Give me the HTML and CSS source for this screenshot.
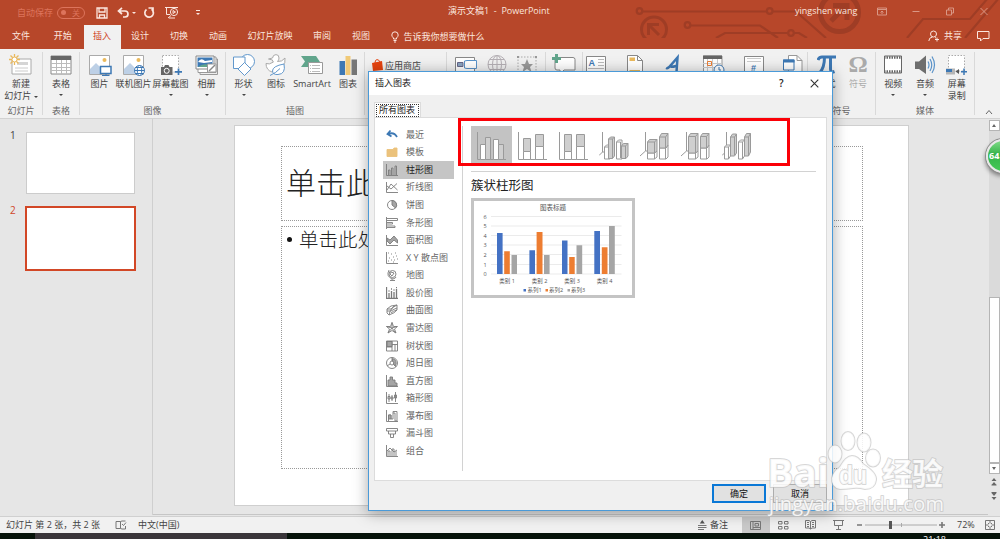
FILE: index.html
```
<!DOCTYPE html>
<html lang="zh-CN">
<head>
    <meta charset="UTF-8">
    <meta name="viewport" content="width=device-width, initial-scale=1.0">
    <title>演示文稿1 - PowerPoint</title>
    <link rel="stylesheet" href="styles.css">
</head>
<body>
    <div class="app">
        <header class="header">
            <svg class="circuit" width="370" height="38" viewBox="630 0 370 38">
                <circle cx="639.5" cy="11" r="2.8"/><circle cx="769.7" cy="11" r="2.8"/>
                <circle cx="687.5" cy="25" r="2.8"/><circle cx="791" cy="33" r="2.8"/>
                <path d="M643 11.5H767M773 11.5H796L826 38M691 25.500H760L778 38M716 38L725 33H788M794 33H799L807 38"/>
                <path d="M907 38L923 19H970L988 -2M965 38L999 -2"/>
                <circle class="ring" cx="654" cy="29.500" r="12.500"/>
                <circle class="ring-big" cx="839.500" cy="12.500" r="19"/>
                <path class="ring" d="M659 35L648.500 24.500M648.500 35V24.500H659"/>
                <path class="ring-big" d="M831 21L846 6M833 5.500H847V20"/>
            </svg>
            <div class="titlebar">
                <div class="quick">
                    <span class="autosave">自动保存</span>
                    <span class="toggle"><i></i>关</span>
                    <svg width="12" height="12" viewBox="0 0 12 12"><path d="M1 1H11V11H1ZM3 1V5H9V1M3.500 11V8H8.500V11" stroke-width="1.300"/></svg>
                    <svg width="12" height="12" viewBox="0 0 12 12"><path d="M1.500 4H8A3 3 0 0 1 8 10H6M5 .8L1.500 4L5 7" stroke-width="1.700"/></svg>
                    <b class="caret"></b>
                    <svg width="12" height="12" viewBox="0 0 12 12"><path d="M3.500 2.500A4.300 4.300 0 1 0 8.500 2.300M5.500 1H10V5.500" stroke-width="1.700"/></svg>
                    <svg class="q-show" width="14" height="13" viewBox="0 0 14 13"><path d="M0 1.500H13M1.500 2V8.500H5M3 12L6 9.500M10 12H4"/><circle cx="9" cy="6" r="3.600"/><path d="M8 4.500L10.500 6L8 7.500Z"/></svg>
                    <b class="caret caret-bar"></b>
                </div>
                <div class="doc-title">演示文稿1&nbsp; -&nbsp; PowerPoint</div>
                <div class="user">yingshen wang</div>
                <div class="window-buttons">
                    <svg width="10" height="9" viewBox="0 0 10 9"><path d="M.5 1H9.500V8H.5ZM.5 2.500H9.500M5 7V4M3.500 5.500L5 4L6.500 5.500"/></svg>
                    <svg width="10" height="9" viewBox="0 0 10 9"><path d="M1.500 4.500H8.500"/></svg>
                    <svg width="10" height="9" viewBox="0 0 10 9"><path d="M1.500 3H6.500V8H1.500ZM3.500 3V1H8.500V6H6.500"/></svg>
                    <svg width="10" height="9" viewBox="0 0 10 9"><path d="M1.500 1L8.500 8M8.500 1L1.500 8"/></svg>
                </div>
            </div>
            <nav class="tabs">
                <a class="tab tab-file">文件</a>
                <a class="tab tab-home">开始</a>
                <a class="tab active">插入</a>
                <a class="tab">设计</a>
                <a class="tab">切换</a>
                <a class="tab">动画</a>
                <a class="tab tab-wide">幻灯片放映</a>
                <a class="tab">审阅</a>
                <a class="tab">视图</a>
                <div class="tell-me">
                    <svg width="8" height="12" viewBox="0 0 8 12"><path d="M2.500 8V7Q.8 5.500 .8 4A3.200 3.200 0 0 1 7.200 4Q7.200 5.500 5.500 7V8ZM2.500 9.500H5.500M3 11H5"/></svg>
                    告诉我你想要做什么
                </div>
                <div class="share">
                    <svg width="12" height="12" viewBox="0 0 12 12"><circle cx="5.500" cy="4" r="3"/><path d="M.8 11Q1 7.300 4.500 7M7 7.500L8 8M9 7.500V11.500M7 9.500H11"/></svg>
                    共享
                    <svg class="comment" width="13" height="11" viewBox="0 0 13 11"><path d="M.5 .5H12V7.500H6L3.500 10V7.500H.5Z"/></svg>
                </div>
            </nav>
        </header>

        <section class="ribbon">
            <div class="group g-slide">
                <div class="tools">
                    <div class="tool">
                        <svg width="24" height="22" viewBox="0 0 24 22"><path d="M3 5H22V20H3Z" fill="#fff" stroke="#aaa"/><path d="M8 8H19V11H8Z" fill="#d5d5d5"/><path d="M6 14H19M6 17H19" stroke="#ccc"/><path d="M5.500 0V11M0 5.500H11M1.500 1.500L9.500 9.500M9.500 1.500L1.500 9.500" stroke="#eab95c" stroke-width="1.300"/><circle cx="5.500" cy="5.500" r="2.500" fill="#fff" stroke="#eab95c"/></svg>
                        <span>新建<br>幻灯片 <b class="caret"></b></span>
                    </div>
                </div>
                <div class="group-name">幻灯片</div>
            </div>
            <div class="group g-table">
                <div class="tools">
                    <div class="tool">
                        <svg width="22" height="22" viewBox="0 0 22 22"><path d="M1 2H21V20H1Z" fill="#fff" stroke="#888"/><path d="M1 2H21V6H1Z" fill="#666"/><path d="M6.500 6V20M11.500 6V20M16.500 6V20M1 9.500H21M1 13.500H21M1 16.500H21" stroke="#bbb"/></svg>
                        <span>表格</span><b class="caret"></b>
                    </div>
                </div>
                <div class="group-name">表格</div>
            </div>
            <div class="group g-image">
                <div class="tools">
                    <div class="tool w34">
                        <svg width="24" height="22" viewBox="0 0 24 22"><path d="M1.500 1.500H21.500V20.500H1.500Z" fill="#fff" stroke="#aaa"/><circle cx="16.500" cy="6" r="2" fill="#eab95c"/><path d="M2 20V15L8 9L15 16V20Z" fill="#bdd0e6"/><path d="M12.500 12.500H23V19.500H12.500Z" fill="#fff" stroke="#3d78b4" stroke-width="1.500"/><path d="M18 20V22M14 21.500H21.500" stroke="#3d78b4"/></svg>
                        <span>图片</span>
                    </div>
                    <div class="tool w36">
                        <svg width="24" height="22" viewBox="0 0 24 22"><path d="M1.500 1.500H21.500V20.500H1.500Z" fill="#fff" stroke="#aaa"/><circle cx="16.500" cy="6" r="2" fill="#eab95c"/><path d="M2 20V15L8 9L15 16V20Z" fill="#bdd0e6"/><g fill="#fff" stroke="#3d78b4"><circle cx="17.500" cy="16.500" r="5"/><ellipse cx="17.500" cy="16.500" rx="2.200" ry="5"/><path d="M12.500 16.500H22.500M13.500 13.500H21.500M13.500 19.500H21.500"/></g></svg>
                        <span>联机图片</span>
                    </div>
                    <div class="tool w39">
                        <svg width="24" height="22" viewBox="0 0 24 22"><path d="M3.500 1.500H19.500V18H3.500Z" fill="#fff" stroke="#aaa" stroke-dasharray="1.500 1.500"/><path d="M2 13H5L6 11H9.500L10.500 13H13.500V21H2Z" fill="#666"/><circle cx="7.700" cy="16.800" r="2.500" fill="#666" stroke="#fff"/><path d="M19.500 14.500V21M16 17.800H23" stroke="#3d78b4" stroke-width="1.700"/></svg>
                        <span>屏幕截图</span><b class="caret"></b>
                    </div>
                    <div class="tool w33">
                        <svg width="24" height="22" viewBox="0 0 24 22"><path d="M5 5H22.500V20.500H5Z" fill="#eee" stroke="#999"/><path d="M3 3H21V18.500H3Z" fill="#fff" stroke="#999"/><path d="M1 2H19V15H1Z" fill="#fff" stroke="#888"/><path d="M2.500 3.500H17.500V13H2.500Z" fill="#3d78b4"/><path d="M3 8Q6 3 10 7L17 6V8L9 9Z" fill="#fff"/><path d="M3 13Q9 8 17 12V13Z" fill="#61a58c"/><path d="M12.500 10H21V18H12.500Z" fill="#fff" stroke="#999"/><path d="M14 17L20 11" stroke="#888" stroke-width="1.500"/></svg>
                        <span>相册</span><b class="caret"></b>
                    </div>
                </div>
                <div class="group-name">图像</div>
            </div>
            <div class="group g-illus">
                <div class="tools">
                    <div class="tool w36">
                        <svg width="24" height="22" viewBox="0 0 24 22"><g fill="#fff" stroke="#6298cc"><circle cx="15.500" cy="7.500" r="7"/><path d="M1.500 3H13V14.500H1.500Z"/><path d="M12.500 8.500L19 15L12.500 21.500L6 15Z"/></g></svg>
                        <span>形状</span><b class="caret"></b>
                    </div>
                    <div class="tool w27">
                        <svg width="24" height="22" viewBox="0 0 24 22"><path d="M8.500 4Q9 .6 12 .6Q15 .6 15 4Q15 6 13.500 7.500Q18 8 21 4Q22 9 18 13L8 18Q2 16 2 9.500Q5 11 9.500 8Q8 7 8.500 6L4.500 5Z" fill="#fff" stroke="#aaa"/><path d="M20 10Q22 20 14 20.500Q9 21 8.500 17Q8.500 12 20 10ZM6 21.500Q12 19 16 14.500" fill="#fff" stroke="#6298cc"/></svg>
                        <span>图标</span>
                    </div>
                    <div class="tool w43">
                        <svg width="24" height="22" viewBox="0 0 24 22"><path d="M1 2H16L20 8L16 13H1L5 7.500Z" fill="#61a58c"/><path d="M8.500 8.500H22.500V19.500H8.500Z" fill="#fff" stroke="#999"/><path d="M12 11.500H20M12 14.500H20M12 17.500H20M10 11.500H11M10 14.500H11M10 17.500H11" stroke="#bbb"/></svg>
                        <span>SmartArt</span>
                    </div>
                    <div class="tool w31">
                        <svg width="20" height="22" viewBox="0 0 20 22"><path d="M1.500 7H7V21H1.500Z" fill="#3d78b4"/><path d="M7.500 2H12.500V21H7.500Z" fill="#f0c977"/><path d="M13.500 5.500H19V21H13.500Z" fill="#777"/></svg>
                        <span>图表</span>
                    </div>
                </div>
                <div class="group-name">插图</div>
            </div>
            <div class="group g-store">
                <svg width="11" height="12" viewBox="0 0 11 12"><path d="M0 4L10 2L11 11L1 12Z" fill="#e6430f"/><path d="M3 4Q3 .6 5 .6T8 3" fill="none" stroke="#e6430f"/></svg>
                应用商店
            </div>
            <div class="group g-links">
                <div class="tools">
                    <svg width="24" height="22" viewBox="0 0 24 22"><path d="M1.500 3.500H20.500V18H1.500Z" fill="#fff" stroke="#888"/><path d="M3.500 8.500H9V12.500H3.500Z" fill="#8aa4c0" stroke="#668"/><path d="M10.500 7L13 6.500H22.500V14.500H13L10.500 14Z" fill="#fff" stroke="#5b93c9"/></svg>
                    <svg width="22" height="22" viewBox="0 0 22 22" fill="none" stroke="#b5b0b5"><circle cx="11" cy="10.500" r="9"/><ellipse cx="11" cy="10.500" rx="4.500" ry="9"/><path d="M2 10.500H20M11 1.500V19M4 5.500H18M4 15.500H18"/></svg>
                    <svg width="22" height="22" viewBox="0 0 22 22"><path d="M2 3H20V20H2Z" fill="none" stroke="#aaa" stroke-dasharray="1.500 1.500"/><path d="M1 2H3V4H1ZM19 2H21V4H19Z" fill="#999"/><path d="M11 5L13 10H17L14 13L15.500 18L11 15L6.500 18L8 13L5 10H9Z" fill="#999"/></svg>
                </div>
            </div>
            <div class="group g-comment">
                <div class="tools">
                    <svg width="26" height="22" viewBox="0 0 26 22"><path d="M6 3.500H22Q24 3.500 24 5.500V16H13L9 20V16H6Q4 16 4 14V5Q4 3.500 6 3.500Z" fill="#fff" stroke="#888"/><path d="M5.500 0V9M1 4.500H10" stroke="#61a58c" stroke-width="3"/></svg>
                </div>
            </div>
            <div class="group g-text">
                <div class="tools">
                    <svg width="22" height="22" viewBox="0 0 22 22"><path d="M1.500 2.500H20.500V20H1.500Z" fill="#fff" stroke="#888"/><path d="M13 5.500H19M13 8.500H19M13 11.500H19M3 14.500H19" stroke="#bbb"/><text x="3.500" y="12" class="ico-a">A</text></svg>
                    <svg width="22" height="22" viewBox="0 0 22 22"><path d="M3.500 1.500H13.500L18.500 6.500V22H3.500Z" fill="#fff" stroke="#888"/><path d="M13.500 1.500V6.500H18.500" fill="none" stroke="#888"/><path d="M5.500 3.500H11V7H5.500ZM5.500 16H16V19H5.500Z" fill="#eab95c"/></svg>
                    <svg width="22" height="22" viewBox="0 0 22 22"><path d="M3 14Q5 15 8 11L14.500 3.500L13.500 18M8 11Q6 14 13 12" fill="none" stroke="#3d78b4" stroke-width="2.500"/></svg>
                    <svg width="24" height="22" viewBox="0 0 24 22"><path d="M1.500 2H20V20H1.500Z" fill="#fff" stroke="#999"/><path d="M1 1.500H20V5H1Z" fill="#666"/><path d="M5.500 5V20M10.500 5V20M15.500 5V20M1 9.500H20M1 13.500H20M1 17.500H20" stroke="#ccc"/><path d="M5.500 7.500H9.500V11.500H5.500Z" fill="none" stroke="#ed7d31"/><circle cx="17" cy="16" r="5" fill="#fff" stroke="#3d78b4"/><path d="M17 13V16H19" fill="none" stroke="#3d78b4"/></svg>
                    <svg width="22" height="22" viewBox="0 0 22 22"><path d="M1.500 2.500H20.500V20H1.500Z" fill="#fff" stroke="#888"/><path d="M4 4.500H18M4 7.500H18" stroke="#ccc"/><text x="8" y="16.500" class="ico-a">#</text></svg>
                    <svg width="22" height="22" viewBox="0 0 22 22"><path d="M6.500 1.500H15L20 6.500V18H6.500Z" fill="#fff" stroke="#999"/><path d="M15 1.500V6.500H20" fill="none" stroke="#999"/><path d="M1.500 6H12V16H1.500Z" fill="#fff" stroke="#3d78b4"/><path d="M1 5.500H12.500V8.500H1Z" fill="#3d78b4"/></svg>
                </div>
            </div>
            <div class="group g-symbol">
                <div class="tools">
                    <div class="tool w34"><svg width="20" height="22" viewBox="0 0 20 22"><path d="M1 6Q2 3 5 3H19M7.500 3Q7.500 14 2.500 19M13.500 3V15Q13.500 19 17.500 17.500" fill="none" stroke="#3d78b4" stroke-width="3"/></svg><span>公式</span></div>
                    <div class="tool w27 off"><em class="glyph">Ω</em><span>符号</span></div>
                </div>
                <div class="group-name">符号</div>
            </div>
            <div class="group g-media">
                <div class="tools">
                    <div class="tool w36">
                        <svg width="20" height="22" viewBox="0 0 20 22"><path d="M1.500 2H18.500V19H1.500Z" fill="#fff" stroke="#666"/><path d="M1 3.500H19M1 17.500H19" stroke="#666" stroke-width="2.500" stroke-dasharray="1.500 1"/></svg>
                        <span>视频</span><b class="caret"></b>
                    </div>
                    <div class="tool w27">
                        <svg width="22" height="22" viewBox="0 0 22 22"><path d="M1 7.500H5L12 1.500V20L5 15H1Z" fill="#6e6e6e"/><path d="M14 7.500Q16 11 14 14.500M16 5Q19.500 11 16 17M18 2.500Q23 11 18 19" fill="none" stroke="#5b93c9" stroke-width="1.200"/></svg>
                        <span>音频</span><b class="caret"></b>
                    </div>
                    <div class="tool w36">
                        <svg width="24" height="22" viewBox="0 0 24 22"><path d="M3.500 1.500H19.500V17H3.500Z" fill="#fff" stroke="#aaa" stroke-dasharray="1.500 1.500"/><path d="M1 14.500H10V20.500H1Z" fill="#b5b5b5"/><path d="M1 15H7V18H1Z" fill="#3d78b4"/><path d="M10.500 17.500L14 15V20Z" fill="#555"/><path d="M19 14.500V21M16 17.800H22" stroke="#3d78b4" stroke-width="1.500"/></svg>
                        <span>屏幕<br>录制</span>
                    </div>
                </div>
                <div class="group-name">媒体</div>
            </div>
            <svg class="collapse" width="8" height="6" viewBox="0 0 8 6"><path d="M1 5L4 1.500L7 5"/></svg>
        </section>

        <main class="workspace">
            <aside class="thumbs">
                <div class="thumb"><span>1</span><div class="thumb-page"></div></div>
                <div class="thumb current"><span>2</span><div class="thumb-page"></div></div>
            </aside>
            <div class="stage">
                <div class="slide">
                    <div class="holder holder-title">单击此</div>
                    <div class="holder holder-body"><i></i>单击此处</div>
                </div>
            </div>
            <div class="scroll">
                <div class="scroll-btn"><b class="arrow up"></b></div>
                <div class="scroll-track"><div class="scroll-thumb"></div></div>
                <div class="scroll-btn"><b class="arrow"></b></div>
                <svg width="8" height="26" viewBox="0 0 8 26"><path d="M4 4L6.500 7H1.500ZM4 8L6.500 11H1.500ZM1.500 10.500H6.500V11.500H1.500ZM4 22L6.500 19H1.500ZM4 26L6.500 23H1.500ZM1.500 18H6.500V19H1.500Z" fill="#666"/></svg>
                <div class="ball">64</div>
            </div>
        </main>

        <footer class="status">
            <span class="s-page">幻灯片 第 2 张，共 2 张</span>
            <svg class="s-book" width="12" height="10" viewBox="0 0 12 10"><path d="M5.500 1.500H1V8.500H5.500V1.500L7 1H10.500M5.500 8.500L7 9H10.500V6M7 4L8.500 5.500L11 2.500"/></svg>
            <span>中文(中国)</span>
            <div class="status-right">
                <svg width="9" height="10" viewBox="0 0 9 10"><path d="M0 5.500H8.500M0 7.500H8.500M0 9.500H6"/><path d="M4.300 0L6.800 3.500H1.800Z" class="solid"/></svg>
                <span class="s-notes">备注</span>
                <div class="view on"><svg width="11" height="9" viewBox="0 0 11 9"><path d="M.5 .5H10.500V8.500H.5ZM3 .5V8.500M5 2.500H8.500V5H5ZM3 6.500H10"/></svg></div>
                <div class="view"><svg width="11" height="9" viewBox="0 0 11 9"><path d="M.5 .5H4V3H.5ZM6.500 .5H10V3H6.500ZM.5 5.500H4V8H.5ZM6.500 5.500H10V8H6.500Z"/></svg></div>
                <div class="view"><svg width="11" height="10" viewBox="0 0 11 10"><path d="M5.500 1.500L4 .5H.5V8H4L5.500 9L7 8H10.500V.5H7ZM5.500 1.500V9M2 2.500H4M2 4.500H4M2 6.500H4M7 2.500H9M7 4.500H9M7 6.500H9"/></svg></div>
                <div class="view"><svg width="11" height="10" viewBox="0 0 11 10"><path d="M0 .5H11M1.500 1V5.500H9.500V1M5.500 5.500V9M3 9.500H8"/></svg></div>
                <svg class="zoom" width="90" height="12" viewBox="0 0 90 12"><path d="M1 6H6M83 6H89M86 3V9" stroke-width="1.600"/><path d="M9 6H81M45.500 4V8" stroke="#aaa"/><path d="M33 2H36V10H33Z" class="solid"/></svg>
                <span class="s-pct">72%</span>
                <svg class="s-fit" width="10" height="10" viewBox="0 0 10 10"><path d="M.5 .5H9.500V9.500H.5ZM5 1V3.500M5 6.500V9M1 5H3.500M6.500 5H9M3 3L4 4M7 3L6 4M3 7L4 6M7 7L6 6"/></svg>
            </div>
        </footer>
        <div class="taskbar"><div class="task"></div><div class="clock">21:18</div></div>
    </div>

    <div class="dialog">
        <div class="dialog-title">
            <span>插入图表</span>
            <b>?</b>
            <svg width="9" height="9" viewBox="0 0 9 9"><path d="M.7 .7L8.300 8.300M8.300 .7L.7 8.300"/></svg>
        </div>
        <div class="dialog-tab"><span>所有图表</span></div>
        <div class="panel">
            <ul class="kinds">
                <li><svg viewBox="0 0 12 12"><path d="M4.500 1.500L1.500 5L5.500 7.500M2 5Q8 2.500 11 8" class="undo"/></svg>最近</li>
                <li><svg viewBox="0 0 12 12"><path d="M1 3.500H7L8 2H11V10.500H1Z" class="folder"/></svg>模板</li>
                <li class="picked"><svg viewBox="0 0 12 12"><path d="M.5 0V11.500H12M2.500 11V6H4V11M5.500 11V4H7V11M9 11V2H10.500V11"/></svg>柱形图</li>
                <li><svg viewBox="0 0 12 12"><path d="M.5 1V11.500H12M1 9L5 3L11.500 9M1 5L5 8L11 2.500"/></svg>折线图</li>
                <li><svg viewBox="0 0 12 12"><circle cx="6" cy="6" r="4.500"/><path d="M6 1.500V6L9.500 9A4.500 4.500 0 0 0 6 1.500Z" class="fill"/></svg>饼图</li>
                <li><svg viewBox="0 0 12 12"><path d="M.5 0V12M1 1.500H11.500V3.500H1M1 5.500H6.500V7H1M1 9H9V10.500H1"/></svg>条形图</li>
                <li><svg viewBox="0 0 12 12"><path d="M.5 1V11.500H12"/><path d="M1 4L4 6L8 2L11.500 6V9L8 6L4 10L1 7Z" class="fill"/></svg>面积图</li>
                <li><svg viewBox="0 0 12 12"><path d="M.5 0V11.500H12"/><path d="M2 1H3M5 2H6M9 1H10M3 6H4M7 5H8M10 4H11M2 9H3M5 8H6M8 8H9M7 10H8M11 7H12"/></svg>X Y 散点图</li>
                <li><svg viewBox="0 0 12 12"><circle cx="6.500" cy="5" r="3.500"/><path d="M3 1Q-.5 8 7 10Q10 9 10 8M4 11.500H9M6 10V11M5 3L8 4L6 7L4 5Z"/></svg>地图</li>
                <li><svg viewBox="0 0 12 12"><path d="M.5 0V11.500H12M3 11V6M5.500 11V4M8 11V5M10.500 11V2M2.500 4H3.500M5 2H6M7.500 3H8.500M10 .5H11" stroke-width="1.300"/></svg>股价图</li>
                <li><svg viewBox="0 0 12 12"><path d="M1 5Q4 1 11 1V6Q9 9 3 11L1 9ZM1 5H5Q7 3 11 1M1 7H5Q8 5 11 4M3 11Q3 7 8 2M5 9Q7 7 11 6"/></svg>曲面图</li>
                <li><svg viewBox="0 0 12 12"><path d="M6 .5L7.500 4.500H11.500L8.500 7L10 11L6 8.500L2 11L3.500 7L.5 4.500H4.500ZM6 .5V6L11 4.500M6 6L9.500 11M6 6L2 11M6 6L.5 4.500"/></svg>雷达图</li>
                <li><svg viewBox="0 0 12 12"><path d="M.5 1H11.500V11H.5ZM6 1V11M6 4.500H11.500M9 4.500V11M.5 7H6"/><path d="M1 1.500H6V6.500H1Z" class="fill"/></svg>树状图</li>
                <li><svg viewBox="0 0 12 12"><circle cx="6" cy="6" r="5.500"/><circle cx="6" cy="6" r="2"/><path d="M6 .5V4M8 7L10 10M4 7L1 9" /><path d="M6.500 1.500A4.500 4.500 0 0 1 9 9L7.500 7Q8.500 5 6.500 4Z" class="fill"/></svg>旭日图</li>
                <li><svg viewBox="0 0 12 12"><path d="M.5 0V11.500H12"/><path d="M2 11V5H4V2H6.500V5H9V8H11V11Z" class="fill"/></svg>直方图</li>
                <li><svg viewBox="0 0 12 12"><path d="M.5 0V11.500H12M3 10V2M6 9V3M9.500 10V0M2 4.500H4V7H2ZM5 5H7V7H5ZM8.500 3H10.500V6H8.500Z"/></svg>箱形图</li>
                <li><svg viewBox="0 0 12 12"><path d="M.5 0V11.500H12M2.500 11V5H5V9H7V1.500H11V11H9V3H7"/><path d="M2.500 5H5V9H2.500Z" class="fill"/></svg>瀑布图</li>
                <li><svg viewBox="0 0 12 12"><path d="M.5 1.500H11.500V4H.5ZM2.500 4V7H9.500V4M4.500 7V10.500H7.500V7"/></svg>漏斗图</li>
                <li><svg viewBox="0 0 12 12"><path d="M.5 0V11.500H12M2 11V6H4V11M6 11V4H8V11M10 11V6M1 6L4 3L8 7L11 5"/></svg>组合</li>
            </ul>
            <div class="detail">
                <div class="subtypes">
                    <div class="sub picked"><svg viewBox="0 0 30 28"><path d="M1.500 0V27.500H30"/><path class="w" d="M4.500 12.500H9.500V27.500H4.500ZM17.500 7.500H22.500V27.500H17.500Z"/><path class="g" d="M9.500 5.500H14.500V27.500H9.500ZM22.500 12.500H27.500V27.500H22.500Z"/></svg></div>
                    <div class="sub"><svg viewBox="0 0 30 28"><path d="M1.500 0V27.500H30"/><path class="w" d="M6.500 19.500H13.500V27.500H6.500ZM18.500 14.500H26.500V27.500H18.500Z"/><path class="g" d="M6.500 6.500H13.500V19.500H6.500ZM18.500 2.500H26.500V14.500H18.500Z"/></svg></div>
                    <div class="sub"><svg viewBox="0 0 30 28"><path d="M1.500 0V27.500H30"/><path class="w" d="M6.500 19.500H13.500V27.500H6.500ZM18.500 14.500H26.500V27.500H18.500Z"/><path class="g" d="M6.500 2.500H13.500V19.500H6.500ZM18.500 2.500H26.500V14.500H18.500Z"/></svg></div>
                    <div class="sub"><svg viewBox="0 0 30 28"><path d="M3.500 0V20L0 23.500M3.500 20H10M27 20L29 18"/><path class="w" d="M5.500 15L7.500 13H11V27H5.500ZM17.500 10L19.500 8H23V27H17.500Z"/><path class="g" d="M9.500 7L11.500 5H15.500V24L13.500 26.500H9.500ZM22.500 14L24.500 11.500H29V24L27 26.500H22.500Z"/><path d="M5.500 15H9.500V27M9.500 7H13.500V26.500M13.500 7L15.500 5M17.500 10H21.500V26M22.500 14H26.500V26.500M26.500 14L29 11.500"/></svg></div>
                    <div class="sub"><svg viewBox="0 0 30 28"><path d="M5.500 0V19L0 24M5.500 19H8M25 21L28 18"/><path class="w" d="M7.500 21H14.500L17 19V25L14.500 27H7.500ZM19.500 16H26L28 13V25L26 27H19.500Z"/><path class="g" d="M7.500 10L9.500 7.500H17V19L14.500 21H7.500ZM19.500 5L21.500 1.500H28V13L26 16H19.500Z"/><path d="M7.500 10H14.500V27M14.500 10L17 7.500M19.500 5H25.500V27M25.500 5L28 1.500"/></svg></div>
                    <div class="sub"><svg viewBox="0 0 30 28"><path d="M5.500 0V19L0 24M5.500 19H8M25 21L28 18"/><path class="w" d="M7.500 21H14.500L17 19V25L14.500 27H7.500ZM19.500 16H26L28 13V25L26 27H19.500Z"/><path class="g" d="M7.500 4.500L9.500 1.500H17V19L14.500 21H7.500ZM19.500 4.500L21.500 1.500H28V13L26 16H19.500Z"/><path d="M7.500 4.500H14.500V27M14.500 4.500L17 1.500M19.500 4.500H25.500V27M25.500 4.500L28 1.500"/></svg></div>
                    <div class="sub"><svg viewBox="0 0 30 28"><path d="M4.500 0V19L0 23.500M4.500 19H8"/><path class="g" d="M8.500 5L10.500 2H14.500V21L12.500 24H8.500ZM22.500 5L24.500 1.500H28.500V20L26.500 24H22.500Z"/><path class="w" d="M2.500 15L4.500 13H8.500V24L6.500 27H2.500ZM16.500 10L18.500 8H22.500V24L20.500 27H16.500Z"/><path d="M2.500 15H6.500V27M6.500 15L8.500 13M8.500 5H12.500V23M12.500 5L14.500 2M16.500 10H20.500V27M20.500 10L22.500 8M22.500 5H26.500V24M26.500 5L28.500 1.500"/></svg></div>
                </div>
                <h2>簇状柱形图</h2>
                <svg class="preview" width="158" height="94" viewBox="0 0 158 94">
                    <text class="chart-title" x="79" y="8.500">图表标题</text>
                    <path class="lines" d="M17 15.500H147.500M17 25H147.500M17 34.500H147.500M17 44H147.500M17 53.500H147.500M17 63.500H147.500M17 73H147.500"/>
                    <g class="axis">
                        <text x="11" y="17.500">6</text><text x="11" y="27">5</text><text x="11" y="36.500">4</text><text x="11" y="46">3</text><text x="11" y="55.500">2</text><text x="11" y="65.500">1</text><text x="11" y="75">0</text>
                    </g>
                    <path fill="#4472c4" d="M23 32H28.600V73H23ZM55.400 49.200H61V73H55.400ZM88 39.600H93.500V73H88ZM120.300 30H126V73H120.300Z"/>
                    <path fill="#ed7d31" d="M30.200 50.200H35.800V73H30.200ZM62.600 31H68.500V73H62.600ZM95.200 56H100.700V73H95.200ZM127.800 46.200H133.500V73H127.800Z"/>
                    <path fill="#a5a5a5" d="M37.500 54H43V73H37.500ZM70 54H75.600V73H70ZM102.500 44.300H108.200V73H102.500ZM135 25H140.800V73H135Z"/>
                    <g class="labels">
                        <text x="33" y="82">类别 1</text><text x="65.500" y="82">类别 2</text><text x="98" y="82">类别 3</text><text x="130.500" y="82">类别 4</text>
                        <text x="60.500" y="91">系列1</text><text x="82" y="91">系列2</text><text x="104" y="91">系列3</text>
                    </g>
                    <path fill="#4472c4" d="M49.500 88H52V90.500H49.500Z"/><path fill="#ed7d31" d="M71.500 88H74V90.500H71.500Z"/><path fill="#a5a5a5" d="M93.500 88H96V90.500H93.500Z"/>
                </svg>
            </div>
        </div>
        <div class="dialog-actions">
            <button class="btn btn-ok">确定</button>
            <button class="btn">取消</button>
        </div>
        <div class="marker"></div>
    </div>

    <svg class="watermark" width="184" height="92" viewBox="764 428 184 92">
        <g class="paw">
            <ellipse cx="835" cy="454" rx="6.500" ry="8.500"/>
            <ellipse cx="848" cy="441" rx="6.500" ry="9"/>
            <ellipse cx="864" cy="442.500" rx="6.500" ry="9"/>
            <ellipse cx="873" cy="458" rx="7" ry="8.500"/>
            <path d="M852 456Q858 456 863 464Q877 473 876 480Q875 489 865 489Q858 487 853 488Q846 489 840 489Q831 487 832 478Q833 472 840 467Q846 456 852 456Z"/>
        </g>
        <text class="wm-bai" x="767" y="487" textLength="62" lengthAdjust="spacingAndGlyphs">Bai</text>
        <text class="wm-du" x="839" y="484" textLength="28" lengthAdjust="spacingAndGlyphs">du</text>
        <text class="wm-cn" x="882" y="485" textLength="61">经验</text>
        <text class="wm-url" x="769" y="511" textLength="175">jingyan.baidu.com</text>
    </svg>
</body>
</html>
```
FILE: styles.css
```
* {
    box-sizing: border-box;
}
body {
    margin: 0;
    width: 1000px;
    height: 539px;
    overflow: hidden;
    position: relative;
    font-family: "Open Sans", "Noto Sans CJK SC", sans-serif;
    font-size: 9px;
    line-height: 12px;
    color: #444;
}
svg {
    display: block;
    flex: none;
}
.app {
    display: flex;
    flex-direction: column;
    height: 539px;
}

/* header */
.header {
    position: relative;
    height: 49px;
    background: #b7472a;
    color: #fbe6df;
}
.header svg {
    fill: none;
    stroke: #fbe6df;
}
.header .circuit {
    position: absolute;
    right: 0;
    top: 0;
    stroke: #9f3d25;
    stroke-width: 2.2;
}
.circuit .ring {
    stroke-width: 3;
}
.circuit .ring-big {
    stroke-width: 5;
}
.titlebar {
    position: relative;
    display: flex;
    align-items: center;
    height: 25px;
}
.quick {
    display: flex;
    align-items: center;
    width: 448px;
    padding-left: 17px;
}
.autosave {
    color: #dd745c;
    width: 40px;
}
.toggle {
    display: flex;
    align-items: center;
    justify-content: space-between;
    width: 28px;
    height: 12px;
    padding: 0 4px 0 3px;
    margin-right: 11px;
    border: 1px solid #dd745c;
    border-radius: 6px;
    font-size: 8px;
    color: #dd745c;
}
.toggle i {
    width: 5px;
    height: 5px;
    border-radius: 50%;
    background: #dd745c;
}
.quick svg {
    margin-right: 9px;
}
.quick .caret {
    color: #fbe6df;
    margin: 0 7px 0 -6px;
}
.quick .q-show {
    margin-left: 1px;
    margin-right: 17px;
}
.caret {
    display: inline-block;
    flex: none;
    border: 2px solid transparent;
    border-top-color: currentColor;
    border-bottom: 0;
    vertical-align: middle;
}
.quick .caret-bar {
    margin: 0;
    position: relative;
    top: 1px;
}
.caret-bar::before {
    content: "";
    position: absolute;
    left: -2px;
    top: -5px;
    width: 4px;
    height: 1px;
    background: #fbe6df;
}
.doc-title {
    width: 347px;
    margin-top: -3px;
}
.user {
    width: 82px;
    margin-top: -3px;
}
.window-buttons {
    display: flex;
    gap: 24px;
    margin-top: -3px;
    opacity: .5;
}
.tabs {
    position: relative;
    display: flex;
    height: 24px;
    line-height: 22px;
}
.tab {
    width: 39px;
    text-align: center;
}
.tab-file {
    width: 42px;
}
.tab-home {
    width: 41.5px;
}
.tab.active {
    width: 37px;
    background: #f1f1f1;
    color: #d0472a;
}
.tab-wide {
    width: 65px;
}
.tell-me {
    display: flex;
    align-items: center;
    gap: 5px;
    margin-left: 10px;
}
.share {
    display: flex;
    align-items: center;
    gap: 4px;
    margin-left: auto;
    padding: 0 10px 2px 0;
}
.share .comment {
    margin-left: 11px;
}

/* ribbon */
.ribbon {
    display: flex;
    height: 70px;
    padding-top: 3px;
    background: #f1f1f1;
    border-bottom: 1px solid #d2d2d2;
}
.group {
    flex: none;
    display: flex;
    flex-direction: column;
    justify-content: space-between;
    height: 63px;
    border-right: 1px solid #d9d9d9;
}
.group-name {
    text-align: center;
    line-height: 12px;
    color: #666;
    margin-bottom: -2px;
}
.tools {
    display: flex;
    justify-content: center;
    padding-top: 2px;
}
.tool {
    display: flex;
    flex-direction: column;
    align-items: center;
    white-space: nowrap;
    text-align: center;
    line-height: 12px;
}
.tool span {
    padding-top: 2px;
}
.tool > .caret {
    margin-top: 4px;
}
.g-slide { width: 43px; }
.g-table { width: 37px; }
.g-image { width: 146px; }
.g-illus { width: 139px; }
.g-links { width: 99px; }
.g-comment { width: 37px; }
.g-text { width: 225px; }
.g-symbol { width: 68px; }
.g-media { width: 99px; }
.w27 { width: 30px; }
.w31 { width: 30px; }
.w33 { width: 33px; }
.w34 { width: 33px; }
.w36 { width: 35px; }
.w39 { width: 39px; }
.w43 { width: 42px; }
.g-image .tools {
    padding-left: 1px;
}
.g-illus .tools {
    padding-right: 1px;
}
.g-store {
    flex-direction: row;
    justify-content: flex-start;
    align-items: flex-start;
    gap: 2px;
    width: 82px;
    padding: 7px 0 0 7px;
    line-height: 13px;
}
.g-links .tools {
    gap: 8px;
}
.g-text .tools {
    gap: 17px;
    padding-right: 1px;
}
.ico-a {
    font: bold 9px "Liberation Sans", sans-serif;
    fill: #3d78b4;
}
.glyph {
    height: 22px;
    font: bold 24px/20px "Liberation Serif", serif;
    color: #aaa;
}
.off {
    color: #aaa;
}
.collapse {
    align-self: flex-end;
    margin: 0 0 3px 10px;
    fill: none;
    stroke: #666;
}

/* slides */
.workspace {
    display: flex;
    height: 398px;
    background: #e6e6e6;
    border-bottom: 1px solid #d0d0d0;
}
.thumbs {
    width: 153px;
    height: 396px;
    padding: 13px 0 0 10px;
    border-right: 1px solid #cfcfcf;
}
.thumb {
    display: flex;
    height: 62px;
    margin-bottom: 12px;
    font-size: 10px;
    line-height: 7px;
}
.thumb span {
    width: 16px;
}
.thumb-page {
    width: 109px;
    height: 62px;
    background: #fff;
    border: 1px solid #ccc;
}
.thumb.current span {
    width: 15px;
    padding-top: 1px;
    color: #d0472a;
}
.current .thumb-page {
    width: 111px;
    height: 65px;
    border: 2px solid #d24726;
}
.stage {
    width: 835px;
    height: 396px;
    padding: 6px 0 0 81px;
    border-bottom: 1px solid #c6c6c6;
}
.slide {
    width: 675px;
    height: 381px;
    padding: 20px 45px 0 46px;
    background: #fff;
    border: 1px solid #cfcfcf;
    color: #222;
}
.holder {
    width: 582px;
    border: 1px dotted #999;
    white-space: nowrap;
    font-family: "Noto Sans CJK SC", sans-serif;
    font-weight: 300;
}
.holder-title {
    height: 75px;
    padding-left: 4px;
    font-size: 30px;
    line-height: 69px;
}
.holder-body {
    display: flex;
    align-items: flex-start;
    height: 243px;
    margin-top: 5px;
    padding: 0 0 0 5px;
    font-size: 19.5px;
    line-height: 23px;
}
.holder-body i {
    width: 5px;
    height: 5px;
    margin: 10px 7px 0 0;
    border-radius: 50%;
    background: #111;
}
.scroll {
    position: relative;
    display: flex;
    flex-direction: column;
    align-items: center;
    width: 12px;
    padding-top: 1px;
}
.scroll-btn {
    display: flex;
    align-items: center;
    justify-content: center;
    width: 11px;
    height: 11px;
    background: #fff;
    border: 1px solid #b5b5b5;
}
.arrow {
    border: 2.5px solid transparent;
    border-top: 3px solid #666;
    border-bottom: 0;
}
.arrow.up {
    border-top: 0;
    border-bottom: 3px solid #666;
}
.scroll-track {
    display: flex;
    flex-direction: column;
    justify-content: flex-end;
    width: 11px;
    height: 332px;
    background: #dadada;
}
.scroll-thumb {
    height: 166px;
    background: #fff;
    border: 1px solid #b5b5b5;
}
.ball {
    position: absolute;
    left: -2px;
    top: 20px;
    width: 34px;
    height: 34px;
    padding-left: 1px;
    border: 2px solid #e8e8e8;
    border-radius: 50%;
    background: linear-gradient(#7fdb86, #35b349 45%, #45c957);
    box-shadow: 0 0 0 1px #8d8d8d, -1px 3px 4px rgba(0, 0, 0, .4);
    color: #fff;
    font-weight: bold;
    line-height: 30px;
}

/* status bar */
.status {
    display: flex;
    align-items: center;
    height: 16px;
    padding-left: 6px;
    background: #f1f1f1;
}
.status svg {
    fill: none;
    stroke: #777;
}
.status svg .solid {
    fill: #555;
    stroke: none;
}
.s-page {
    width: 109px;
    white-space: nowrap;
}
.s-book {
    margin-right: 11px;
}
.status-right {
    display: flex;
    align-items: center;
    margin-left: auto;
    padding-right: 5px;
}
.s-notes {
    width: 32px;
    margin-left: 3px;
}
.view {
    display: flex;
    align-items: center;
    justify-content: center;
    width: 27.5px;
    height: 16px;
}
.view.on {
    background: #c9c9c9;
}
.zoom {
    margin: 0 11px 0 4px;
}
.s-pct {
    width: 28px;
}
.taskbar {
    display: flex;
    height: 6px;
    padding-left: 35px;
    background: #06130a;
    overflow: hidden;
}
.task {
    width: 252px;
    background: #3a363a;
}
.clock {
    margin-left: 636px;
    padding-top: 1px;
    color: #fff;
    line-height: 12px;
}

/* insert chart dialog */
.dialog {
    position: absolute;
    left: 368px;
    top: 71px;
    width: 465px;
    height: 440px;
    padding: 0 5px;
    background: #f0f0f0;
    border: 1px solid #4a9ad8;
    box-shadow: 0 2px 14px rgba(0, 0, 0, .35);
    color: #222;
}
.dialog-title {
    display: flex;
    align-items: center;
    height: 23px;
    margin: 0 -5px;
    padding: 0 13px 1px 6px;
    background: #fff;
}
.dialog-title span {
    width: 405px;
}
.dialog-title b {
    width: 31px;
    font-size: 10px;
    font-weight: 600;
}
.dialog-title svg {
    fill: none;
    stroke: #333;
    stroke-width: 1.1;
}
.dialog-tab {
    width: 47px;
    height: 15px;
    margin-top: 7px;
    padding: 1px;
    background: #fff;
    border: 1px solid #dcdcdc;
    border-bottom: 0;
}
.dialog-tab span {
    display: block;
    width: 43px;
    height: 13px;
    line-height: 10px;
    padding-left: 2px;
    white-space: nowrap;
    border: 1px dotted #333;
}
.panel {
    display: flex;
    height: 364px;
    width: 453px;
    padding: 8px 9px 9px 8px;
    background: #fff;
    border: 1px solid #dcdcdc;
}
.kinds {
    list-style: none;
    width: 80px;
    height: 345px;
    margin: 0;
    padding: 0;
    border-right: 1px solid #d2d2d2;
    color: #666;
}
.kinds li {
    display: flex;
    align-items: center;
    gap: 8px;
    width: 71px;
    height: 17.57px;
    padding-left: 3px;
    white-space: nowrap;
}
.kinds .picked {
    background: #c5c5c5;
    color: #222;
}
.kinds svg {
    width: 12px;
    height: 12px;
    fill: none;
    stroke: #7a7a7a;
    stroke-width: .9;
}
.kinds .fill {
    fill: #a5a5a5;
}
.kinds .undo {
    stroke: #3d78b4;
    stroke-width: 1.8;
}
.kinds .folder {
    fill: #ebc27c;
    stroke: #ebc27c;
}
.detail {
    width: 353px;
    padding-left: 8px;
}
.subtypes {
    display: flex;
    height: 46px;
    border-bottom: 1px solid #d2d2d2;
}
.sub {
    display: flex;
    align-items: center;
    justify-content: center;
    width: 41px;
    height: 40px;
}
.sub.picked {
    background: #c3c3c3;
}
.sub svg {
    width: 30px;
    height: 28px;
    margin-right: 1px;
    fill: none;
    stroke: #9a9a9a;
    stroke-width: 1;
}
.sub .w {
    fill: #fff;
}
.sub .g {
    fill: #cfcfcf;
}
.detail h2 {
    margin: 5px 0 3px;
    font-size: 12.5px;
    font-weight: normal;
    line-height: 18px;
}
.preview {
    box-sizing: content-box;
    border: 3px solid #c4c4c4;
}
.preview text {
    font-size: 5.5px;
    fill: #555;
    text-anchor: middle;
}
.preview .chart-title {
    font-size: 6.5px;
}
.preview .lines {
    stroke: #e6e6e6;
    stroke-width: .8;
}
.dialog-actions {
    display: flex;
    justify-content: flex-end;
    gap: 7px;
    padding-top: 3px;
}
.btn {
    width: 54px;
    height: 19px;
    padding: 0;
    background: #e1e1e1;
    border: 1px solid #adadad;
    font: inherit;
    color: #111;
}
.btn-ok {
    border: 2px solid #0a78d6;
}
.marker {
    position: absolute;
    left: 89px;
    top: 46px;
    width: 332px;
    height: 48px;
    border: 3px solid #fb0007;
}

/* watermark */
.watermark {
    position: absolute;
    left: 764px;
    top: 428px;
    fill: #fff;
    fill-opacity: .85;
    stroke: #bdbdbd;
    stroke-opacity: .6;
    stroke-width: 2;
    stroke-linejoin: round;
    paint-order: stroke;
    font-family: "Liberation Sans", "Noto Sans CJK SC", sans-serif;
}
.wm-bai {
    font-family: "Open Sans", sans-serif;
    font-size: 40px;
    font-weight: bold;
}
.wm-du {
    font-size: 26px;
    font-weight: bold;
}
.wm-cn {
    font-size: 31px;
    font-weight: bold;
}
.wm-url {
    font-family: "Open Sans", sans-serif;
    font-size: 20px;
}
```
